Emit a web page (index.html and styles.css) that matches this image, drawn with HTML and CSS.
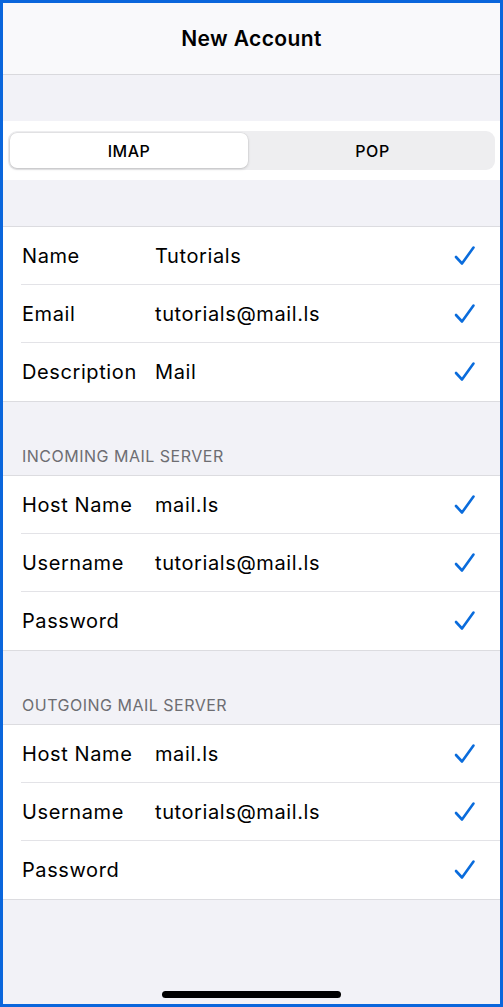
FILE: index.html
```html
<!DOCTYPE html>
<html lang="en">
<head>
<meta charset="utf-8">
<title>New Account</title>
<link rel="stylesheet" href="styles.css">
</head>
<body>
<div class="frame">
  <header class="nav"><h1 class="nav-title">New Account</h1></header>
  <div class="spacer-top"></div>
  <div class="seg-strip">
    <div class="seg">
      <div class="seg-item seg-active">IMAP</div>
      <div class="seg-item">POP</div>
    </div>
  </div>
  <div class="spacer-mid"></div>

  <section class="group">
    <div class="row"><span class="label">Name</span><span class="value">Tutorials</span><svg class="check" viewBox="0 0 24 22"><path d="M3 12 L9 18.5 L20.5 2.5"/></svg></div>
    <div class="row"><span class="label">Email</span><span class="value">tutorials@mail.ls</span><svg class="check" viewBox="0 0 24 22"><path d="M3 12 L9 18.5 L20.5 2.5"/></svg></div>
    <div class="row"><span class="label">Description</span><span class="value">Mail</span><svg class="check" viewBox="0 0 24 22"><path d="M3 12 L9 18.5 L20.5 2.5"/></svg></div>
  </section>

  <div class="section-header">INCOMING MAIL SERVER</div>
  <section class="group">
    <div class="row"><span class="label">Host Name</span><span class="value">mail.ls</span><svg class="check" viewBox="0 0 24 22"><path d="M3 12 L9 18.5 L20.5 2.5"/></svg></div>
    <div class="row"><span class="label">Username</span><span class="value">tutorials@mail.ls</span><svg class="check" viewBox="0 0 24 22"><path d="M3 12 L9 18.5 L20.5 2.5"/></svg></div>
    <div class="row"><span class="label">Password</span><span class="value"></span><svg class="check" viewBox="0 0 24 22"><path d="M3 12 L9 18.5 L20.5 2.5"/></svg></div>
  </section>

  <div class="section-header">OUTGOING MAIL SERVER</div>
  <section class="group">
    <div class="row"><span class="label">Host Name</span><span class="value">mail.ls</span><svg class="check" viewBox="0 0 24 22"><path d="M3 12 L9 18.5 L20.5 2.5"/></svg></div>
    <div class="row"><span class="label">Username</span><span class="value">tutorials@mail.ls</span><svg class="check" viewBox="0 0 24 22"><path d="M3 12 L9 18.5 L20.5 2.5"/></svg></div>
    <div class="row"><span class="label">Password</span><span class="value"></span><svg class="check" viewBox="0 0 24 22"><path d="M3 12 L9 18.5 L20.5 2.5"/></svg></div>
  </section>

  <div class="bottom">
    <div class="home-indicator"></div>
  </div>
</div>
</body>
</html>
```

FILE: styles.css
```css
html, body {
  margin: 0;
  padding: 0;
}
body {
  font-family: Inter, "Liberation Sans", Arial, sans-serif;
  color: #000;
}
.frame {
  box-sizing: border-box;
  width: 503px;
  height: 1007px;
  border: 3px solid #0a66dc;
  background: #f2f2f7;
  display: flex;
  flex-direction: column;
  overflow: hidden;
}
.nav {
  height: 71px;
  background: #f9f9fb;
  border-bottom: 1px solid #d9d9dd;
  display: flex;
  align-items: center;
  justify-content: center;
  flex-shrink: 0;
}
.nav-title {
  margin: 0;
  font-size: 21px;
  font-weight: 600;
  letter-spacing: 0.4px;
  padding-bottom: 0;
}
.spacer-top {
  height: 46px;
  flex-shrink: 0;
}
.seg-strip {
  background: #fff;
  height: 59px;
  padding: 10px 5px 0 5px;
  box-sizing: border-box;
  flex-shrink: 0;
}
.seg {
  height: 39px;
  background: #eeeef0;
  border-radius: 9px;
  display: flex;
  padding: 2px;
  box-sizing: border-box;
}
.seg-item {
  flex: 1;
  display: flex;
  align-items: center;
  justify-content: center;
  font-size: 16px;
  font-weight: 500;
  letter-spacing: 0.5px;
  border-radius: 7px;
  padding-left: 4px;
}
.seg-active {
  background: #fff;
  box-shadow: 0 1px 3px rgba(0,0,0,0.18), 0 0 0 0.5px rgba(0,0,0,0.06);
  flex: 0 0 238px;
  padding-left: 0;
}
.spacer-mid {
  height: 46px;
  flex-shrink: 0;
}
.group {
  background: #fff;
  border-top: 1px solid #dcdce0;
  border-bottom: 1px solid #dcdce0;
  flex-shrink: 0;
}
.row {
  height: 58px;
  display: flex;
  align-items: center;
  margin-left: 18px;
  padding-right: 23px;
  border-bottom: 1px solid #e3e3e7;
  box-sizing: border-box;
}
.row:last-child {
  border-bottom: none;
  height: 58px;
}
.label {
  width: 133px;
  padding-left: 1px;
  font-size: 20px;
  letter-spacing: 0.6px;
  flex-shrink: 0;
}
.value {
  flex: 1;
  font-size: 20px;
  letter-spacing: 0.6px;
}
.check {
  width: 24px;
  height: 22px;
  fill: none;
  stroke: #0a6cdc;
  stroke-width: 2.6;
  stroke-linecap: round;
  stroke-linejoin: round;
}
.section-header {
  height: 73px;
  box-sizing: border-box;
  padding: 0 0 9px 19px;
  display: flex;
  align-items: flex-end;
  font-size: 16px;
  letter-spacing: 0.5px;
  color: #6d6d72;
  flex-shrink: 0;
}
.bottom {
  flex: 1;
  display: flex;
  align-items: flex-end;
  justify-content: center;
  padding-bottom: 6px;
}
.home-indicator {
  width: 179px;
  height: 7px;
  border-radius: 4px;
  background: #000;
}
```
